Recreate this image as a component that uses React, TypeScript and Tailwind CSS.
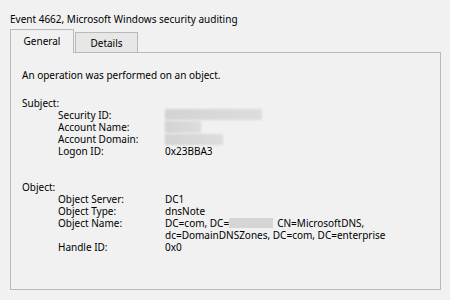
export default function App() {
  const font = { fontFamily: '"Noto Sans", "Open Sans", sans-serif' };
  return (
    <div
      className="w-[450px] h-[300px] bg-[#f0f1f0] text-[10px] leading-[12px] text-black overflow-hidden"
      style={font}
    >
      <div className="pl-[10px] pt-[13px] h-[29px]">Event 4662, Microsoft Windows security auditing</div>

      {/* tabs */}
      <div className="flex items-end pl-[10px] h-[23px]">
        <div className="relative z-10 w-[64px] h-[24px] -mb-px border border-b-0 border-[#b9b9b9] bg-[#f0f1f0] flex items-center justify-center pb-[1px]">
          General
        </div>
        <div className="ml-[1px] w-[63px] h-[20px] border border-b-0 border-[#b9b9b9] bg-[#e6e7e6] flex items-center justify-center pt-[1px]">
          Details
        </div>
      </div>

      {/* panel */}
      <div className="ml-[10px] w-[431px] h-[238px] border border-[#b9b9b9] px-[11px] pt-[16px]">
        <div>An operation was performed on an object.</div>

        <div className="mt-[16px]">Subject:</div>
        <div className="pl-[36px]">
          <Row label="Security ID:">
            <Blur className="w-[97px] h-[11px] mt-[-1px]" />
          </Row>
          <Row label="Account Name:">
            <Blur className="w-[36px] h-[12px]" />
          </Row>
          <Row label="Account Domain:">
            <Blur className="w-[58px] h-[11px]" />
          </Row>
          <Row label="Logon ID:">0x23BBA3</Row>
        </div>

        <div className="mt-[24px]">Object:</div>
        <div className="pl-[36px]">
          <Row label="Object Server:">DC1</Row>
          <Row label="Object Type:">dnsNote</Row>
          <Row label="Object Name:">
            <div>
              <div className="flex items-center">
                DC=com, DC=
                <span className="inline-block w-[44px] h-[10px] bg-[#d4d5d4] blur-[0.6px]" />
                <span className="ml-[4px]">CN=MicrosoftDNS,</span>
              </div>
              <div>dc=DomainDNSZones, DC=com, DC=enterprise</div>
            </div>
          </Row>
          <Row label="Handle ID:">0x0</Row>
        </div>
      </div>
    </div>
  );
}

function Row({ label, children }: { label: string; children: React.ReactNode }) {
  return (
    <div className="flex min-h-[12px]">
      <div className="w-[107px] shrink-0">{label}</div>
      <div className="flex items-center">{children}</div>
    </div>
  );
}

function Blur({ className }: { className: string }) {
  return <div className={"bg-gradient-to-r from-[#d2d3d2] to-[#dcdddc] blur-[1px] " + className} />;
}
